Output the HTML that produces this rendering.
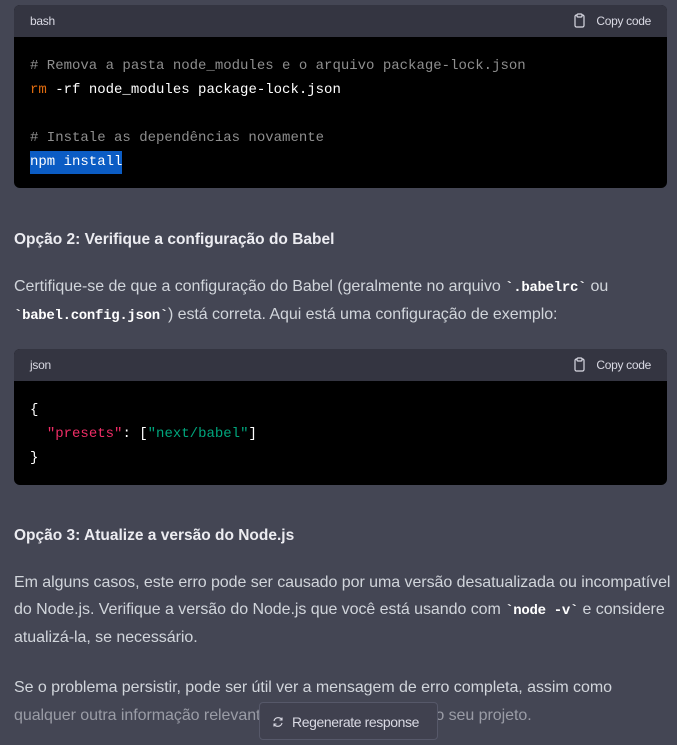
<!DOCTYPE html>
<html><head><meta charset="utf-8"><style>
*{margin:0;padding:0;box-sizing:border-box}
body{width:677px;height:745px;background:#444654;overflow:hidden;position:relative;font-family:"Liberation Sans",sans-serif;color:#d1d5db}
.blk{position:absolute;left:14px;width:653px;border-radius:6px;overflow:hidden;background:#000}
.hd{height:32px;background:#343541;color:#d9d9e3;font-size:12px;letter-spacing:-0.3px;position:relative}
.hd .l{position:absolute;left:16px;top:9px}
.hd .r{position:absolute;right:16px;top:9px}
.hd svg{position:absolute;right:82px;top:8px}
.code{position:absolute;left:16px;font-family:"Liberation Mono",monospace;font-size:14px;white-space:pre;color:#fff;line-height:18px}
.t{position:absolute;left:14px;white-space:nowrap;font-size:16px;letter-spacing:-0.05px}
.b{font-weight:bold;color:#ececf1;font-size:15.5px;letter-spacing:0}
code{font-family:"Liberation Mono",monospace;font-weight:bold;font-size:14px;color:#fff;letter-spacing:-0.3px}
.cm{color:#8e8e8e}
</style></head><body>
<div class="blk" style="top:5px;height:183px">
 <div class="hd"><span class="l">bash</span><svg width="11" height="15" viewBox="0 0 11 15"><rect x="1" y="2" width="9" height="12" rx="1.5" fill="none" stroke="#d9d9e3" stroke-width="1.2"/><rect x="3" y="1" width="5" height="3" rx="1" fill="#343541" stroke="#d9d9e3" stroke-width="1.2"/></svg><span class="r">Copy code</span></div>
 <div class="code cm" style="top:52px"># Remova a pasta node_modules e o arquivo package-lock.json</div>
 <div class="code" style="top:76px"><span style="color:#df6b0f">rm</span> -rf node_modules package-lock.json</div>
 <div class="code cm" style="top:124px"># Instale as dependências novamente</div>
 <div class="code" style="top:146px;left:16px;background:#0b5cc4;padding:2px 0 3px">npm install</div>
</div>
<div class="t b" style="top:231px">Opção 2: Verifique a configuração do Babel</div>
<div class="t" style="top:278px">Certifique-se de que a configuração do Babel (geralmente no arquivo <code>`.babelrc`</code> ou</div>
<div class="t" style="top:306px"><code>`babel.config.json`</code>) está correta. Aqui está uma configuração de exemplo:</div>
<div class="blk" style="top:349px;height:136px">
 <div class="hd"><span class="l">json</span><svg width="11" height="15" viewBox="0 0 11 15"><rect x="1" y="2" width="9" height="12" rx="1.5" fill="none" stroke="#d9d9e3" stroke-width="1.2"/><rect x="3" y="1" width="5" height="3" rx="1" fill="#343541" stroke="#d9d9e3" stroke-width="1.2"/></svg><span class="r">Copy code</span></div>
 <div class="code" style="top:52px">{</div>
 <div class="code" style="top:76px">  <span style="color:#ef2d66">"presets"</span>: [<span style="color:#00a67d">"next/babel"</span>]</div>
 <div class="code" style="top:100px">}</div>
</div>
<div class="t b" style="top:527px">Opção 3: Atualize a versão do Node.js</div>
<div class="t" style="top:574px">Em alguns casos, este erro pode ser causado por uma versão desatualizada ou incompatível</div>
<div class="t" style="top:601px">do Node.js. Verifique a versão do Node.js que você está usando com <code>`node -v`</code> e considere</div>
<div class="t" style="top:629px">atualizá-la, se necessário.</div>
<div class="t" style="top:679px">Se o problema persistir, pode ser útil ver a mensagem de erro completa, assim como</div>
<div class="t" style="top:707px;color:#9a9ca6">qualquer outra informação relevante sobre a configuração do seu projeto.</div>
<div style="position:absolute;left:259px;top:702px;width:179px;height:38px;background:#40414f;border:1px solid #565869;border-radius:4px;color:#d9d9e3;font-size:14px;letter-spacing:-0.4px">
 <svg style="position:absolute;left:12px;top:13px" width="12" height="12" viewBox="0 0 12 12"><path d="M10 4A4.3 4.3 0 0 0 2 5M2 8a4.3 4.3 0 0 0 8-1M10 1.5V4H7.5M2 10.5V8h2.5" fill="none" stroke="#d9d9e3" stroke-width="1.1"/></svg>
 <span style="position:absolute;left:32px;top:11px">Regenerate response</span>
</div>
</body></html>
